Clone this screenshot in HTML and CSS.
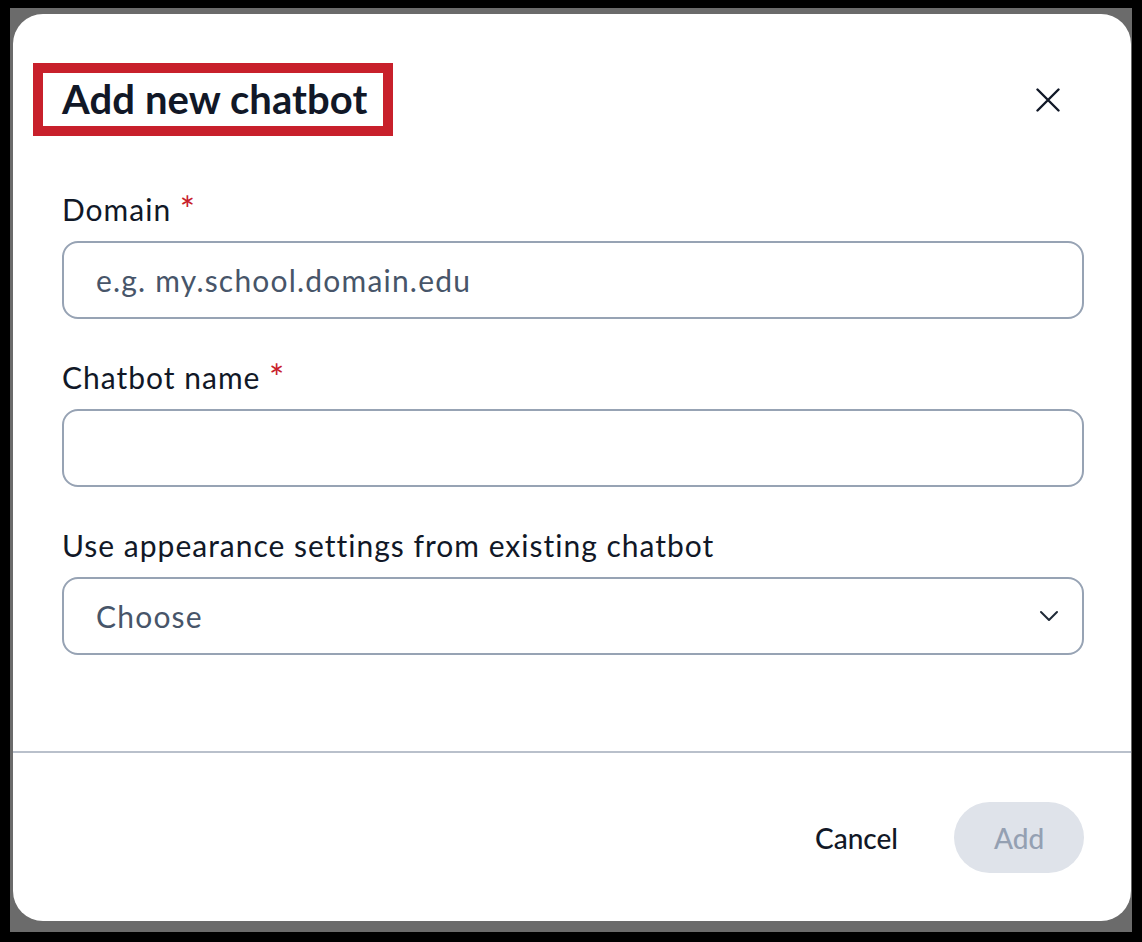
FILE: index.html
```html
<!DOCTYPE html>
<html lang="en">

<head>
    <meta charset="UTF-8">
    <meta name="viewport" content="width=device-width, initial-scale=1.0">
    <title>Add new chatbot</title>
    <link rel="stylesheet" href="styles.css">
</head>

<body>
    <div class="backdrop">
        <div class="modal">
            <div class="modal-head flex-between">
                <h2 class="title"><span class="mark">Add new chatbot</span></h2>
                <button class="close" type="button" aria-label="Close">
                    <svg width="24" height="24" viewBox="0 0 24 24" fill="none" stroke="#111827" stroke-width="2.4" stroke-linecap="round">
                        <path d="M1.5 1.5 22.5 22.5M22.5 1.5 1.5 22.5" />
                    </svg>
                </button>
            </div>

            <div class="modal-body">
                <div class="field">
                    <label for="domain">Domain <span class="req">*</span></label>
                    <input type="text" id="domain" name="domain" placeholder="e.g. my.school.domain.edu" autocomplete="off">
                </div>
                <div class="field">
                    <label for="name">Chatbot name <span class="req">*</span></label>
                    <input type="text" id="name" name="name" autocomplete="off">
                </div>
                <div class="field">
                    <label>Use appearance settings from existing chatbot</label>
                    <div class="select flex-between">
                        <span>Choose</span>
                        <svg width="20" height="12" viewBox="0 0 20 12" fill="none" stroke="#1f2937" stroke-width="2" stroke-linecap="round" stroke-linejoin="round">
                            <path d="M2 2 10 10 18 2" />
                        </svg>
                    </div>
                </div>
            </div>

            <div class="modal-foot">
                <button class="btn btn-ghost" type="button">Cancel</button>
                <button class="btn btn-add" type="button" disabled>Add</button>
            </div>
        </div>
    </div>
</body>

</html>
```

FILE: styles.css
```css
* {
    padding: 0;
    margin: 0;
    box-sizing: border-box;
    font-family: Lato, "Open Sans", Arial, sans-serif;
}

body {
    background-color: #000;
    height: 942px;
    overflow: hidden;
}

.flex-between {
    display: flex;
    justify-content: space-between;
    align-items: center;
}

.backdrop {
    margin: 8px 10px 0 10px;
    height: 924px;
    background-color: #6b6b6b;
    padding: 6px 1px 0 3px;
}

.modal {
    height: 907px;
    background-color: #fff;
    border-radius: 30px;
    display: flex;
    flex-direction: column;
    color: #111827;
}

/* header */
.modal-head {
    padding: 49px 47px 0 20px;
}

.title {
    font-size: 40px;
    font-weight: 700;
    line-height: 53px;
    letter-spacing: 0.1px;
}

.mark {
    display: block;
    border: 10px solid #c8202b;
    padding: 0 15px 0 19px;
}

.close {
    width: 48px;
    height: 48px;
    border: none;
    background: none;
    display: flex;
    justify-content: center;
    align-items: center;
    cursor: pointer;
    margin-right: 12px;
}

/* fields */
.modal-body {
    padding: 53px 47px 0 49px;
    display: flex;
    flex-direction: column;
    gap: 38px;
    flex: 1;
}

.field {
    display: flex;
    flex-direction: column;
    gap: 12px;
}

.field label {
    font-size: 30px;
    line-height: 40px;
    letter-spacing: 1px;
    color: #111827;
}

.req {
    color: #c8202b;
    font-size: 36px;
    line-height: 20px;
    vertical-align: -2px;
}

.field input,
.select {
    height: 78px;
    width: 100%;
    border: 2px solid #97a3b4;
    border-radius: 16px;
    padding: 0 23px 0 32px;
    font-size: 30px;
    letter-spacing: 1.2px;
    color: #111827;
    background-color: #fff;
}

.field input:focus {
    outline: none;
}

.field input::placeholder {
    color: #475569;
}

.select {
    color: #475569;
}

/* footer */
.modal-foot {
    border-top: 2px solid #b9c0cb;
    padding: 49px 47px 48px 0;
    display: flex;
    justify-content: flex-end;
    align-items: center;
    gap: 26px;
}

.btn {
    height: 71px;
    border: none;
    border-radius: 36px;
    font-size: 28px;
    font-weight: 500;
    padding: 0 30px;
    background: none;
    cursor: pointer;
}

.btn-ghost {
    color: #111827;
}

.btn-add {
    width: 130px;
    background-color: #dfe3ea;
    color: #94a0b2;
    cursor: default;
}
```
